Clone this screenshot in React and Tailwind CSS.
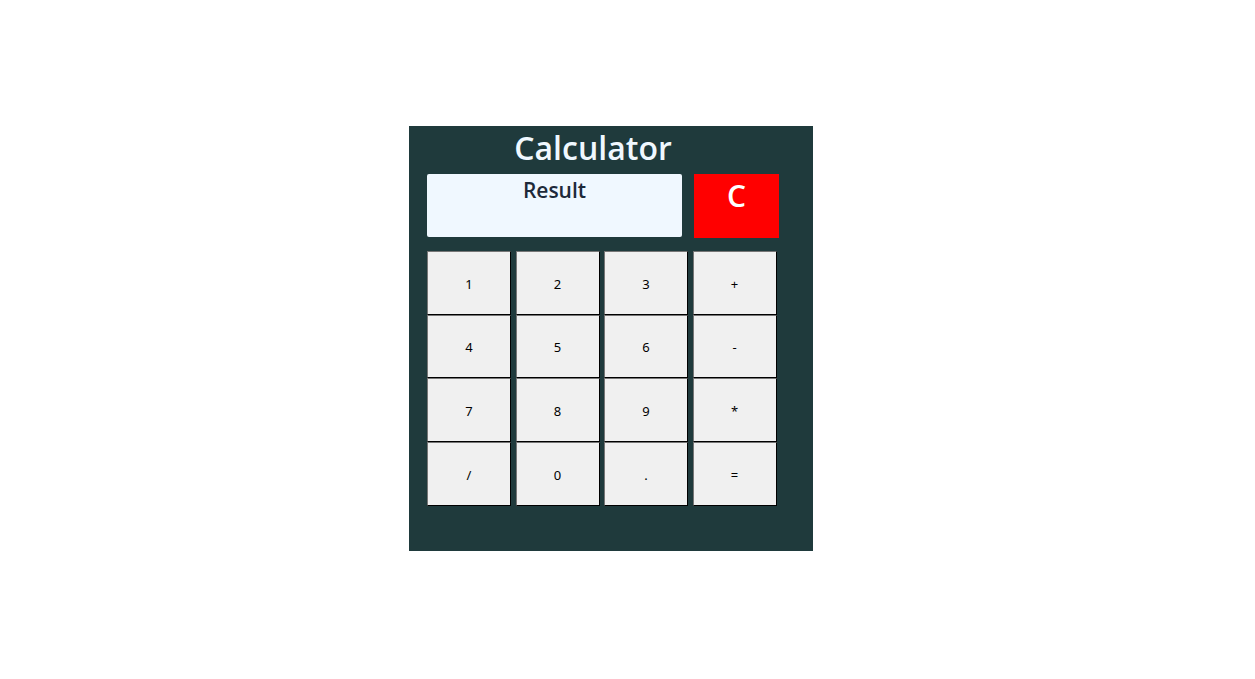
import React from 'react'

const keys = ['1', '2', '3', '+', '4', '5', '6', '-', '7', '8', '9', '*', '/', '0', '.', '=']

export default function App() {
  return (
    <div className="min-h-screen bg-white pt-[126px] pl-[409px]" style={{ fontFamily: '"Noto Sans", "Open Sans", sans-serif' }}>
      <div className="w-[404px] h-[425px] bg-[#1f3a3c]">
        <h1 className="ml-[18px] w-[332px] text-center text-[32px] leading-[44px] font-semibold text-[#f0f8ff]" style={{ fontFamily: '"Open Sans", "Noto Sans", sans-serif' }}>
          Calculator
        </h1>
        <div className="mt-[4px] ml-[18px] flex gap-[12px]">
          <div className="w-[255px] h-[63px] rounded-[2px] bg-[#f0f8ff] text-center text-[21px] font-semibold leading-[30px] text-[#1e2a3a] pt-[1px]" style={{ fontFamily: '"Open Sans", "Noto Sans", sans-serif' }}>
            Result
          </div>
          <button className="w-[85px] h-[64px] bg-[#ff0000] text-white text-[30px] font-semibold leading-[40px] pb-[20px]" style={{ fontFamily: '"Open Sans", "Noto Sans", sans-serif' }}>
            C
          </button>
        </div>
        <div className="mt-[13px] ml-[18px] grid grid-cols-[84px_84px_84px_84px] gap-x-[4.5px] w-fit">
          {keys.map((k) => (
            <button
              key={k}
              className="h-[63.7px] bg-[#f0f0f0] border border-t-[#767676] border-l-[#767676] border-b-black border-r-black text-[13px] text-black pt-[3px]"
            >
              {k}
            </button>
          ))}
        </div>
      </div>
    </div>
  )
}
